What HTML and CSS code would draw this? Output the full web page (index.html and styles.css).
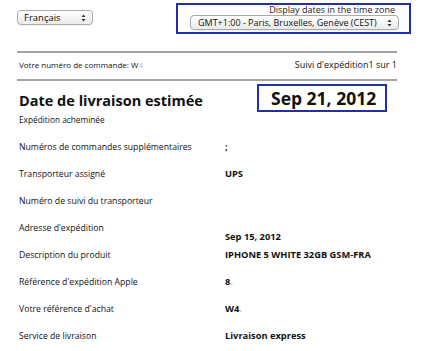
FILE: index.html
```html
<!DOCTYPE html>
<html lang="fr">
<head>
<meta charset="utf-8">
<title>Suivi d'expédition</title>
<link rel="stylesheet" href="styles.css">
</head>
<body>
<div class="page">
  <header class="top">
    <div class="popup popup-lang">
      <span class="popup-label">Français</span>
      <svg class="arrows" width="5" height="8" viewBox="0 0 5 8"><path d="M0.5 3 L2.5 0.5 L4.5 3 Z M0.5 5 L2.5 7.5 L4.5 5 Z" fill="#333"/></svg>
    </div>
    <div class="tz-box">
      <div class="tz-caption">Display dates in the time zone</div>
      <div class="popup popup-tz">
        <span class="popup-label">GMT+1:00 - Paris, Bruxelles, Genève (CEST)</span>
        <svg class="arrows" width="5" height="8" viewBox="0 0 5 8"><path d="M0.5 3 L2.5 0.5 L4.5 3 Z M0.5 5 L2.5 7.5 L4.5 5 Z" fill="#333"/></svg>
      </div>
    </div>
  </header>

  <div class="rule"></div>
  <div class="order-row">
    <span class="order-num">Votre numéro de commande: W<span class="faint">4</span></span>
    <span class="order-track">Suivi d'expédition1 sur 1</span>
  </div>
  <div class="rule"></div>

  <div class="heading-row">
    <h1 class="title">Date de livraison estimée</h1>
    <div class="date-box">Sep 21, 2012</div>
  </div>
  <p class="status">Expédition acheminée</p>

  <dl class="details">
    <div class="row"><dt>Numéros de commandes supplémentaires</dt><dd>;</dd></div>
    <div class="row"><dt>Transporteur assigné</dt><dd>UPS</dd></div>
    <div class="row"><dt>Numéro de suivi du transporteur</dt><dd></dd></div>
    <div class="row"><dt>Adresse d'expédition</dt><dd class="addr">Sep 15, 2012</dd></div>
    <div class="row"><dt>Description du produit</dt><dd>IPHONE 5 WHITE 32GB GSM-FRA</dd></div>
    <div class="row"><dt>Référence d'expédition Apple</dt><dd>8<span class="faint">.</span></dd></div>
    <div class="row"><dt>Votre référence d'achat</dt><dd>W4<span class="faint">.</span></dd></div>
    <div class="row"><dt>Service de livraison</dt><dd>Livraison express</dd></div>
  </dl>
</div>
</body>
</html>
```

FILE: styles.css
```css
html, body {
  margin: 0;
  padding: 0;
  background: #ffffff;
}

body {
  font-family: "Open Sans", "DejaVu Sans", sans-serif;
  font-size: 9px;
  color: #111;
}

.page {
  width: 380px;
  padding-left: 17px;
}

.top {
  display: flex;
  align-items: flex-start;
  height: 51px;
}

.popup {
  display: flex;
  align-items: center;
  justify-content: space-between;
  box-sizing: border-box;
  height: 15px;
  border: 1px solid #a9a9a9;
  border-radius: 4px;
  background: linear-gradient(#ffffff, #ebebeb);
  padding: 0 6px 0 6px;
  font-size: 9.5px;
  color: #111;
  white-space: nowrap;
  box-shadow: 0 1px 0 rgba(0,0,0,0.06);
}

.popup-lang {
  width: 76px;
  margin-top: 10px;
}

.tz-box {
  box-sizing: border-box;
  margin-left: auto;
  margin-right: -14px;
  margin-top: 3px;
  width: 235px;
  height: 31px;
  border: 2px solid #2030a8;
  padding: 0 10px 0 12px;
  display: flex;
  flex-direction: column;
  align-items: flex-end;
}

.tz-caption {
  font-size: 9px;
  line-height: 10px;
  color: #222;
  margin-right: 4px;
}

.popup-tz {
  width: 209px;
  padding-left: 7px;
  font-size: 9px;
}

.rule {
  height: 2px;
  background: #a3a3a3;
}

.order-row {
  display: flex;
  justify-content: space-between;
  align-items: center;
  height: 26px;
  padding-left: 2px;
  padding-bottom: 3px;
  box-sizing: border-box;
}

.order-num {
  font-size: 8px;
}

.order-track {
  font-size: 9px;
}

.faint {
  color: #bbb;
}

.heading-row {
  display: flex;
  align-items: flex-start;
  height: 32px;
}

.title {
  margin: 11px 0 0 2px;
  font-size: 14.5px;
  font-weight: 700;
  line-height: 18px;
  color: #111;
}

.date-box {
  box-sizing: border-box;
  margin-left: auto;
  margin-right: 10px;
  margin-top: 3px;
  width: 130px;
  height: 28px;
  border: 2px solid #2030a8;
  padding-left: 12px;
  font-size: 17.5px;
  font-weight: 700;
  line-height: 24px;
  color: #111;
}

.status {
  margin: 1px 0 0 0;
  padding-left: 2px;
  font-size: 8.3px;
  line-height: 12px;
}

.details {
  margin: 13px 0 0 0;
}

.row {
  display: grid;
  grid-template-columns: 208px 1fr;
  height: 27px;
  align-items: start;
  padding-top: 2px;
  box-sizing: border-box;
}

.row dt {
  padding-left: 2px;
  font-size: 8.7px;
  line-height: 12px;
}

.row dd {
  margin: 0;
  font-size: 9.3px;
  font-weight: 700;
  line-height: 12px;
}

.row dd.addr {
  margin-top: 9px;
}
```
